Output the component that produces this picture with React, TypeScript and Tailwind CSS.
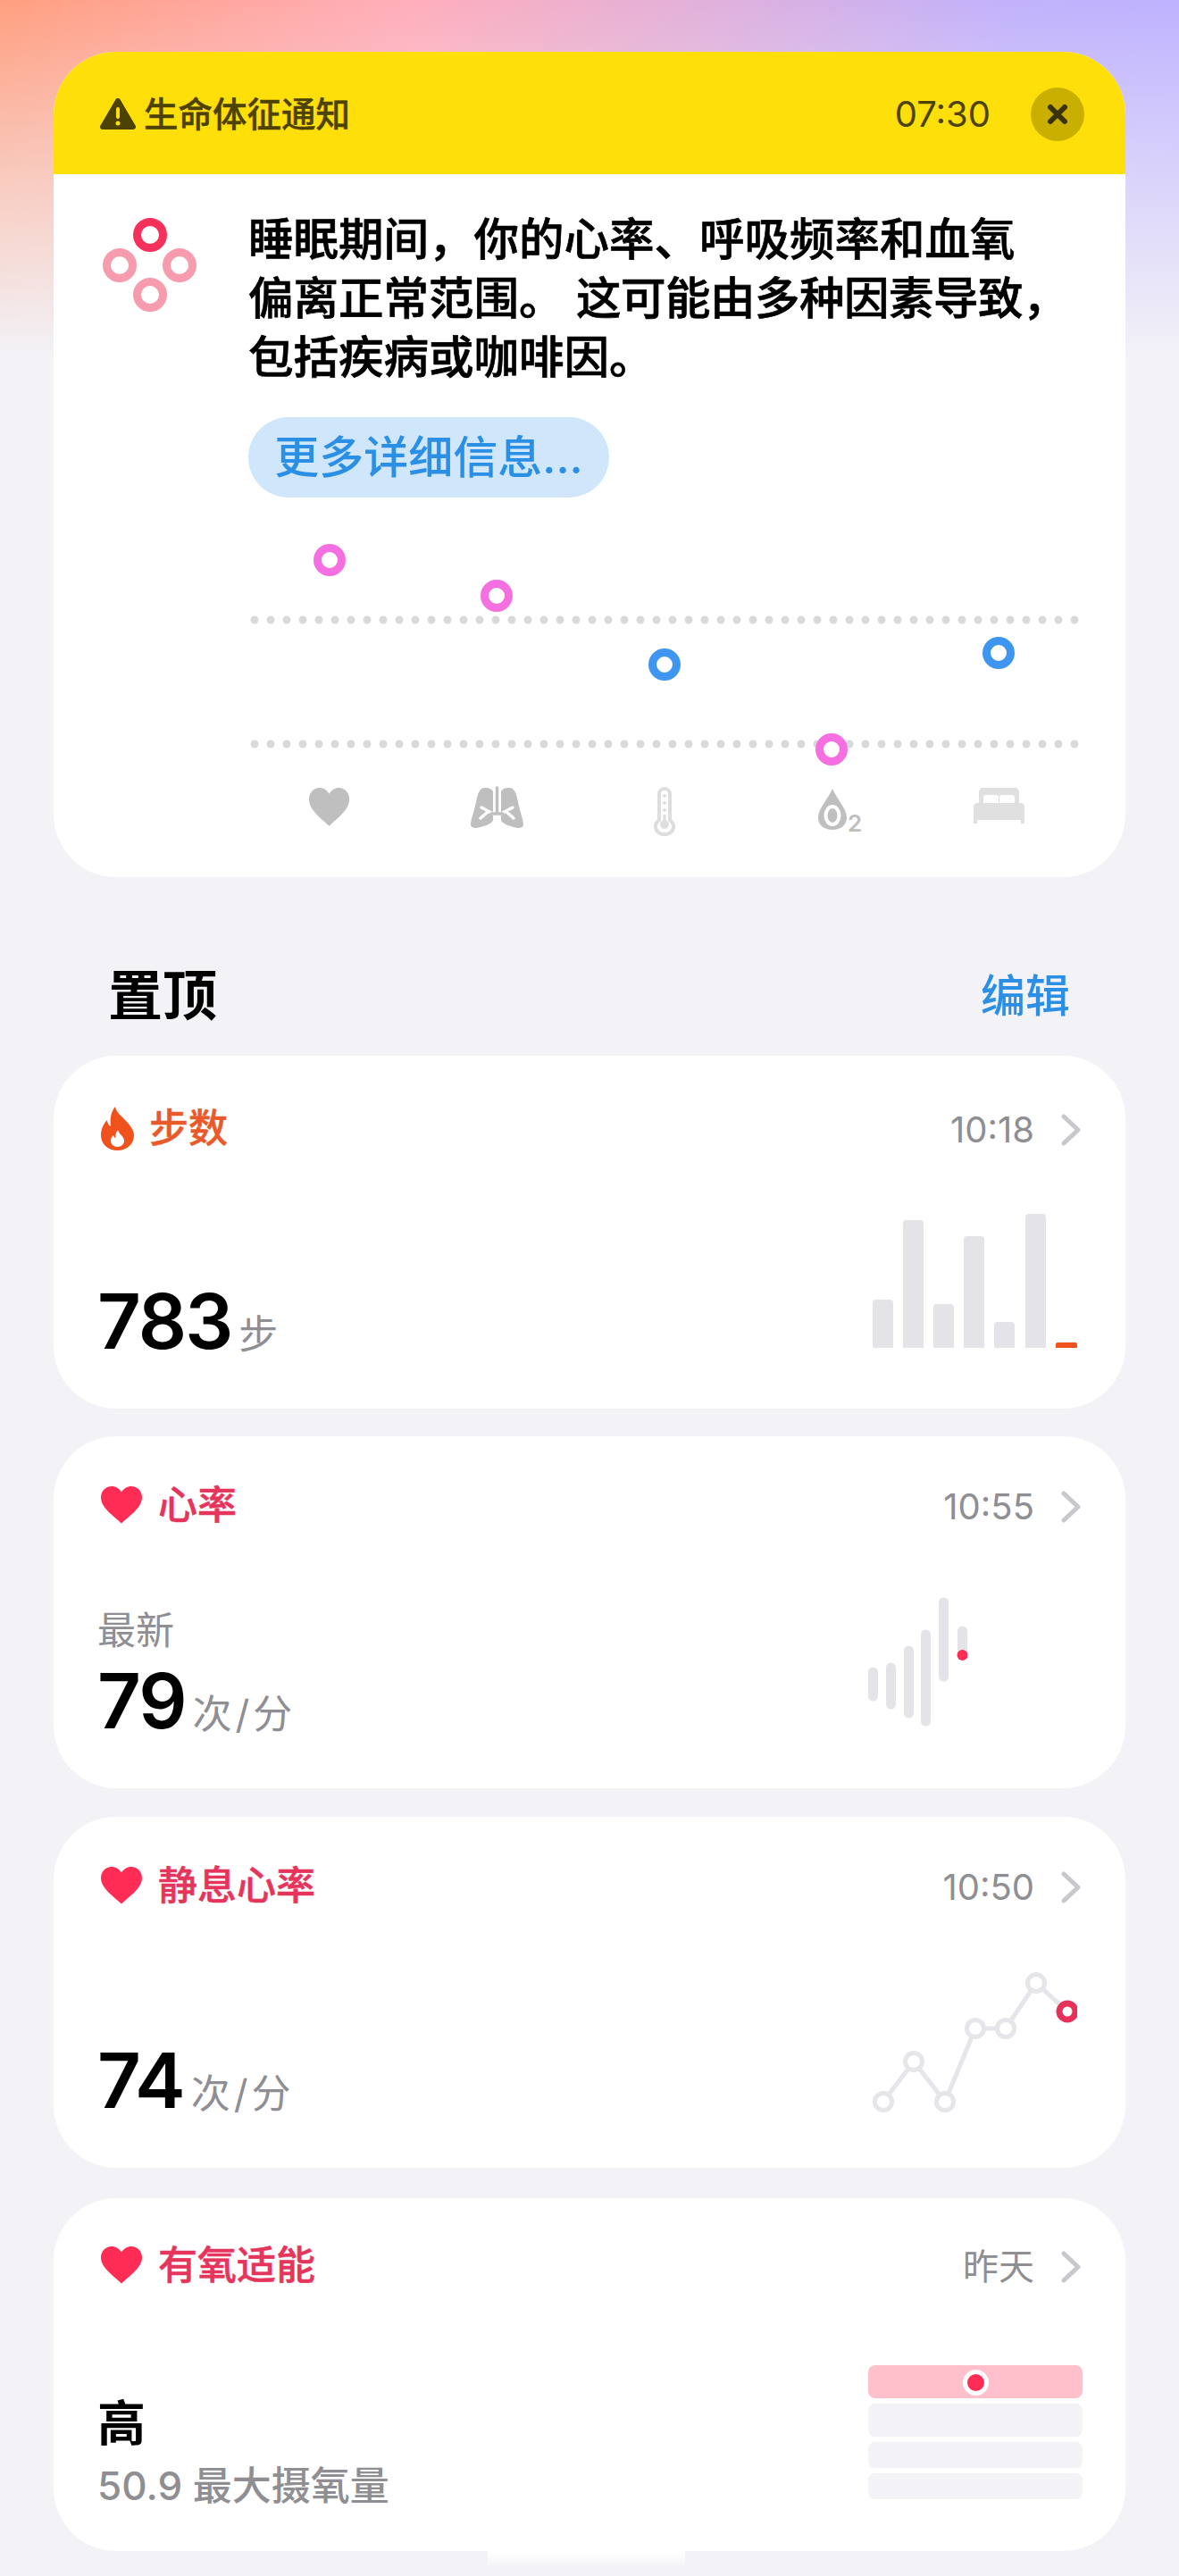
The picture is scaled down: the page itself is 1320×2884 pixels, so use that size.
import { FC, ReactNode } from 'react'

const HEART = 'M23 41.5C14 33 0 24 0 12.5C0 5 5.5 0 12 0C16.5 0 20.5 2.5 23 6.5C25.5 2.5 29.5 0 34 0C40.5 0 46 5 46 12.5C46 24 32 33 23 41.5Z'

const Heart: FC = () => (
  <svg width="46" height="42" viewBox="0 0 46 42" className="mr-[18px] shrink-0">
    <path d={HEART} fill="#ff2d55" />
  </svg>
)

const Flame: FC = () => (
  <svg width="37" height="49" viewBox="0 0 37 49" className="mr-[17px] shrink-0">
    <path d="M16 0C17 7 24 11 30 18C35 24 37 28 37 32C37 42 29 49 18.5 49C8 49 0 42 0 32C0 25 3 19 7 15C7.5 19 8.5 21 11 22C10 14 11 6 16 0Z" fill="#f0521d" />
    <path d="M19 26C20 31 26 33 26 38C26 42 23 45 18.5 45C14 45 11 42 11 38C11 36 12 33.5 14 32C14.5 34 15.5 35 16.5 35C16 32 17 28 19 26Z" fill="#fff" />
  </svg>
)

const Chevron: FC = () => (
  <svg width="22" height="36" viewBox="0 0 22 36" className="shrink-0">
    <path d="M3 3L19 18L3 33" fill="none" stroke="#c7c7cc" strokeWidth="5" strokeLinecap="round" strokeLinejoin="round" />
  </svg>
)

type CardProps = {
  icon: ReactNode,
  title: string,
  titleClass: string,
  time: string,
  className: string,
  left: ReactNode,
  chart: ReactNode,
}

const MetricCard: FC<CardProps> = ({ icon, title, titleClass, time, className, left, chart }) => {
  return (
    <section className={`flex flex-col justify-between rounded-[70px] bg-white pr-[50px] pl-[49px] ${className}`}>
      <div className="flex h-[50px] items-center justify-between">
        <div className="ml-[4px] flex items-center">
          {icon}
          <span className={`text-[44px] leading-[50px] font-medium [-webkit-text-stroke:0.5px_currentColor] ${titleClass}`}>{title}</span>
        </div>
        <div className="flex items-center pt-[3px]">
          <span className="mr-[30px] text-[40px] leading-[50px] text-[#8e8e93]">{time}</span>
          <Chevron />
        </div>
      </div>
      <div className="flex items-end justify-between">
        {left}
        {chart}
      </div>
    </section>
  )
}

const Reading: FC<{ value: string, unit: string }> = ({ value, unit }) => (
  <div className="flex items-baseline">
    <span className="text-[85px] leading-[60px] font-semibold tracking-[-2px] text-black">{value}</span>
    <span className="ml-[8px] h-[60px] text-[44px] leading-[60px] tracking-[4px] text-[#8e8e93]">{unit}</span>
  </div>
)

const AlertChart: FC = () => (
  <svg width="932" height="344" viewBox="278 600 932 344" className="mt-[43px]">
    {[694, 833].map((y) => (
      <line key={y} x1="285" x2="1207" y1={y} y2={y} stroke="#d9d9d9" strokeWidth="9" strokeLinecap="round" strokeDasharray="0 18" />
    ))}
    {[
      [369, 627, '#f56fe0'],
      [556, 667, '#f56fe0'],
      [744, 744, '#3f96f0'],
      [931, 839, '#f56fe0'],
      [1118, 731, '#3f96f0'],
    ].map(([cx, cy, color]) => (
      <circle key={cx} cx={cx} cy={cy} r="13.5" fill="#fff" stroke={color as string} strokeWidth="9" />
    ))}
    <path d={HEART} fill="#bfbfbf" transform="translate(346 882) scale(0.98 1.03)" />
    <g fill="#bfbfbf">
      <path d="M543 882C537 882 535 888 533 898C531 908 527 918 527 923C527 926 530 927 533 927C540 926 552 922 552 918V887C552 884 548 882 543 882Z" />
      <path d="M570 882C576 882 578 888 580 898C582 908 586 918 586 923C586 926 583 927 580 927C573 926 561 922 561 918V887C561 884 565 882 570 882Z" />
    </g>
    <g fill="none" strokeLinecap="round" strokeWidth="3.5">
      <path d="M556.5 882V910" stroke="#bfbfbf" />
      <path d="M552 911L539 904M546 909L538 916M561 911L574 904M567 909L575 916" stroke="#fff" />
      <path d="M550 911H563" stroke="#bfbfbf" />
    </g>
    <g fill="none" stroke="#dedede">
      <path d="M738 918V889C738 881 750 881 750 889V918C758 925 753 934 744 934C735 934 730 925 738 918Z" strokeWidth="4" />
    </g>
    <g fill="#dedede">
      <circle cx="744" cy="891" r="2" />
      <circle cx="744" cy="899" r="2" />
      <circle cx="744" cy="907" r="2" />
      <circle cx="744" cy="923" r="5" />
      <rect x="742.5" y="912" width="3" height="10" />
    </g>
    <path d="M932 883C926 896 916 906 916 915C916 924 923 929 932 929C941 929 948 924 948 915C948 906 938 896 932 883Z" fill="#bfbfbf" />
    <ellipse cx="932" cy="913" rx="7.5" ry="10" fill="none" stroke="#fff" strokeWidth="4" />
    <text x="949" y="931" fontSize="26" fontWeight="600" fill="#bfbfbf">2</text>
    <g fill="#e0e0e0">
      <path d="M1101 882H1136C1139 882 1141 884 1141 887V899H1136V893C1136 891 1135 890 1133 890H1122C1120 890 1119 891 1119 893V899H1118V893C1118 891 1117 890 1115 890H1104C1102 890 1101 891 1101 893V899H1096V887C1096 884 1098 882 1101 882Z" />
      <path d="M1094 899H1143C1145 899 1147 901 1147 903V922H1143V918H1094V922H1090V903C1090 901 1092 899 1094 899Z" />
    </g>
  </svg>
)

const StepBars: FC = () => (
  <svg width="232" height="152" viewBox="0 0 232 152" className="mr-[1px] mb-[13px]">
    {[
      [0, 54],
      [34, 143],
      [68, 49],
      [102, 125],
      [136, 29],
      [171, 150],
    ].map(([x, h]) => (
      <path key={x} d={`M${x} 150V${154 - h}a4 4 0 0 1 4-4h15a4 4 0 0 1 4 4V150Z`} fill="#e3e3e8" />
    ))}
    <path d="M205 150V146a2 2 0 0 1 2-2h20a2 2 0 0 1 2 2V150Z" fill="#f0521d" />
  </svg>
)

const PulseBars: FC = () => (
  <svg width="111" height="146" viewBox="972 1788 111 146" className="mr-[127px] mb-[16px]">
    <g stroke="#e3e3e8" strokeWidth="11" strokeLinecap="round">
      <line x1="977.5" x2="977.5" y1="1873" y2="1900" />
      <line x1="997.5" x2="997.5" y1="1868" y2="1909" />
      <line x1="1017.5" x2="1017.5" y1="1849" y2="1919" />
      <line x1="1036.5" x2="1036.5" y1="1831" y2="1928" />
      <line x1="1056.5" x2="1056.5" y1="1795" y2="1878" />
      <line x1="1077.5" x2="1077.5" y1="1827" y2="1854" />
    </g>
    <circle cx="1077.5" cy="1854" r="6" fill="#ff2d55" />
  </svg>
)

const RestingLine: FC = () => {
  const points = [
    [989, 2353],
    [1023, 2308],
    [1058, 2353],
    [1092, 2271],
    [1126, 2271],
    [1160, 2220],
  ]
  return (
    <svg width="230" height="158" viewBox="976 2208 230 158" className="mr-[4px] mb-[8px]">
      <polyline
        points={`${points.map((p) => p.join(',')).join(' ')} 1195,2252`}
        fill="none"
        stroke="#e5e5ea"
        strokeWidth="5"
      />
      {points.map(([cx, cy]) => (
        <circle key={cx} cx={cx} cy={cy} r="9.5" fill="#fff" stroke="#e5e5ea" strokeWidth="5" />
      ))}
      <circle cx="1195" cy="2252" r="9" fill="#fff" stroke="#e8315a" strokeWidth="7" />
    </svg>
  )
}

const LevelBlocks: FC = () => (
  <div className="relative -mr-[2px] mb-[10px] flex w-[240px] flex-col gap-[6px]">
    <div className="h-[37px] rounded-[8px] bg-[#ffc0cc]" />
    <div className="h-[37px] rounded-[8px] bg-[#f2f2f7]" />
    <div className="h-[29px] rounded-[8px] bg-[#f2f2f7]" />
    <div className="h-[29px] rounded-[8px] bg-[#f2f2f7]" />
    <div className="absolute top-[5px] left-[106px] h-[29px] w-[29px] rounded-full border-[5px] border-white bg-[#ff2d55]" />
  </div>
)

const App: FC = () => {
  return (
    <div className="relative h-[2884px] w-[1320px] overflow-hidden bg-[#f2f2f7] px-[60px] pt-[58px] font-['Inter','Noto_Sans_CJK_SC',sans-serif]">
      <div className="absolute inset-x-0 top-0 h-[420px] bg-[linear-gradient(to_bottom,rgba(242,242,247,0)_0%,rgba(242,242,247,0.55)_50%,#f2f2f7_95%),linear-gradient(to_right,#ff9f7f_0%,#ffaebb_35%,#c2b2fb_85%,#bfb2ff_100%)]" />

      <section className="relative h-[924px] overflow-hidden rounded-[70px] bg-white">
        <header className="flex h-[137px] items-center justify-between bg-[#ffdf0a] pt-[3px] pr-[46px] pl-[52px]">
          <div className="flex items-center">
            <svg width="40" height="36" viewBox="0 0 40 36" className="mr-[9px]">
              <path d="M20 3L37 32H3Z" fill="#4d4200" stroke="#4d4200" strokeWidth="6" strokeLinejoin="round" />
              <rect x="18" y="10" width="4" height="13" rx="2" fill="#ffdf0a" />
              <circle cx="20" cy="28" r="2.5" fill="#ffdf0a" />
            </svg>
            <span className="text-[38.5px] leading-[50px] font-medium text-[#4d4200] [-webkit-text-stroke:0.4px_currentColor]">生命体征通知</span>
          </div>
          <div className="flex items-center">
            <span className="mr-[45px] text-[40px] leading-[50px] text-[#4d4200]">07:30</span>
            <div className="flex h-[60px] w-[60px] items-center justify-center rounded-full bg-[#c9b000]">
              <svg width="26" height="26" viewBox="0 0 26 26">
                <path d="M5 5L21 21M21 5L5 21" stroke="#3a3200" strokeWidth="6" strokeLinecap="round" />
              </svg>
            </div>
          </div>
        </header>

        <div className="flex pt-[40px] pl-[55px]">
          <svg width="105" height="105" viewBox="0 0 105 105" className="mt-[9px] mr-[58px] shrink-0">
            <circle cx="53" cy="19" r="14.5" fill="none" stroke="#f5305a" strokeWidth="9" />
            <circle cx="19" cy="53" r="14.5" fill="none" stroke="#f79cae" strokeWidth="9" />
            <circle cx="86" cy="53" r="14.5" fill="none" stroke="#f79cae" strokeWidth="9" />
            <circle cx="53" cy="86" r="14.5" fill="none" stroke="#f79cae" strokeWidth="9" />
          </svg>
          <div>
            <p className="text-[50.5px] leading-[66px] font-medium text-black [-webkit-text-stroke:0.7px_currentColor]">
              <span className="block">睡眠期间，你的心率、呼吸频率和血氧</span>
              <span className="block">偏离正常范围。 <span className="tracking-[-0.5px]">这可能由多种因素导致，</span></span>
              <span className="block">包括疾病或咖啡因。</span>
            </p>
            <button className="mt-[34px] flex h-[90px] w-[404px] items-center justify-center rounded-[45px] bg-[#cfe6fb] text-[50px] font-medium text-[#2b8fe6]">
              更多详细信息...
            </button>
            <AlertChart />
          </div>
        </div>
      </section>

      <div className="relative mt-[98px] mb-[32px] flex items-center justify-between pr-[62px] pl-[61px]">
        <h2 className="text-[61px] leading-[70px] font-bold text-black">置顶</h2>
        <span className="text-[50px] leading-[70px] font-medium text-[#2b8fe6]">编辑</span>
      </div>

      <div className="relative">
        <MetricCard
          className="h-[395px] pt-[56px] pb-[53px]"
          icon={<Flame />}
          title="步数"
          titleClass="text-[#e85a2a]"
          time="10:18"
          left={<Reading value="783" unit="步" />}
          chart={<StepBars />}
        />
        <MetricCard
          className="mt-[31px] h-[394px] pt-[52px] pb-[53px]"
          icon={<Heart />}
          title="心率"
          titleClass="text-[#e5355c]"
          time="10:55"
          left={
            <div>
              <div className="mb-[25px] text-[43px] leading-[50px] text-[#8e8e93]">最新</div>
              <Reading value="79" unit="次/分" />
            </div>
          }
          chart={<PulseBars />}
        />
        <MetricCard
          className="mt-[32px] h-[393px] pt-[52px] pb-[53px]"
          icon={<Heart />}
          title="静息心率"
          titleClass="text-[#e5355c]"
          time="10:50"
          left={<Reading value="74" unit="次/分" />}
          chart={<RestingLine />}
        />
        <MetricCard
          className="mt-[34px] h-[395px] pt-[50px] pb-[48px]"
          icon={<Heart />}
          title="有氧适能"
          titleClass="text-[#e5355c]"
          time="昨天"
          left={
            <div>
              <div className="mb-[14px] text-[54px] leading-[60px] font-bold text-black">高</div>
              <div className="text-[44px] leading-[50px] font-medium text-[#8e8e93]">50.9 最大摄氧量</div>
            </div>
          }
          chart={<LevelBlocks />}
        />
      </div>

      <div className="absolute top-[2833px] left-[546px] h-[40px] w-[221px] bg-[linear-gradient(to_bottom,rgba(255,255,255,0),#fff_60%,rgba(255,255,255,0.2))]" />
    </div>
  )
}

export default App
